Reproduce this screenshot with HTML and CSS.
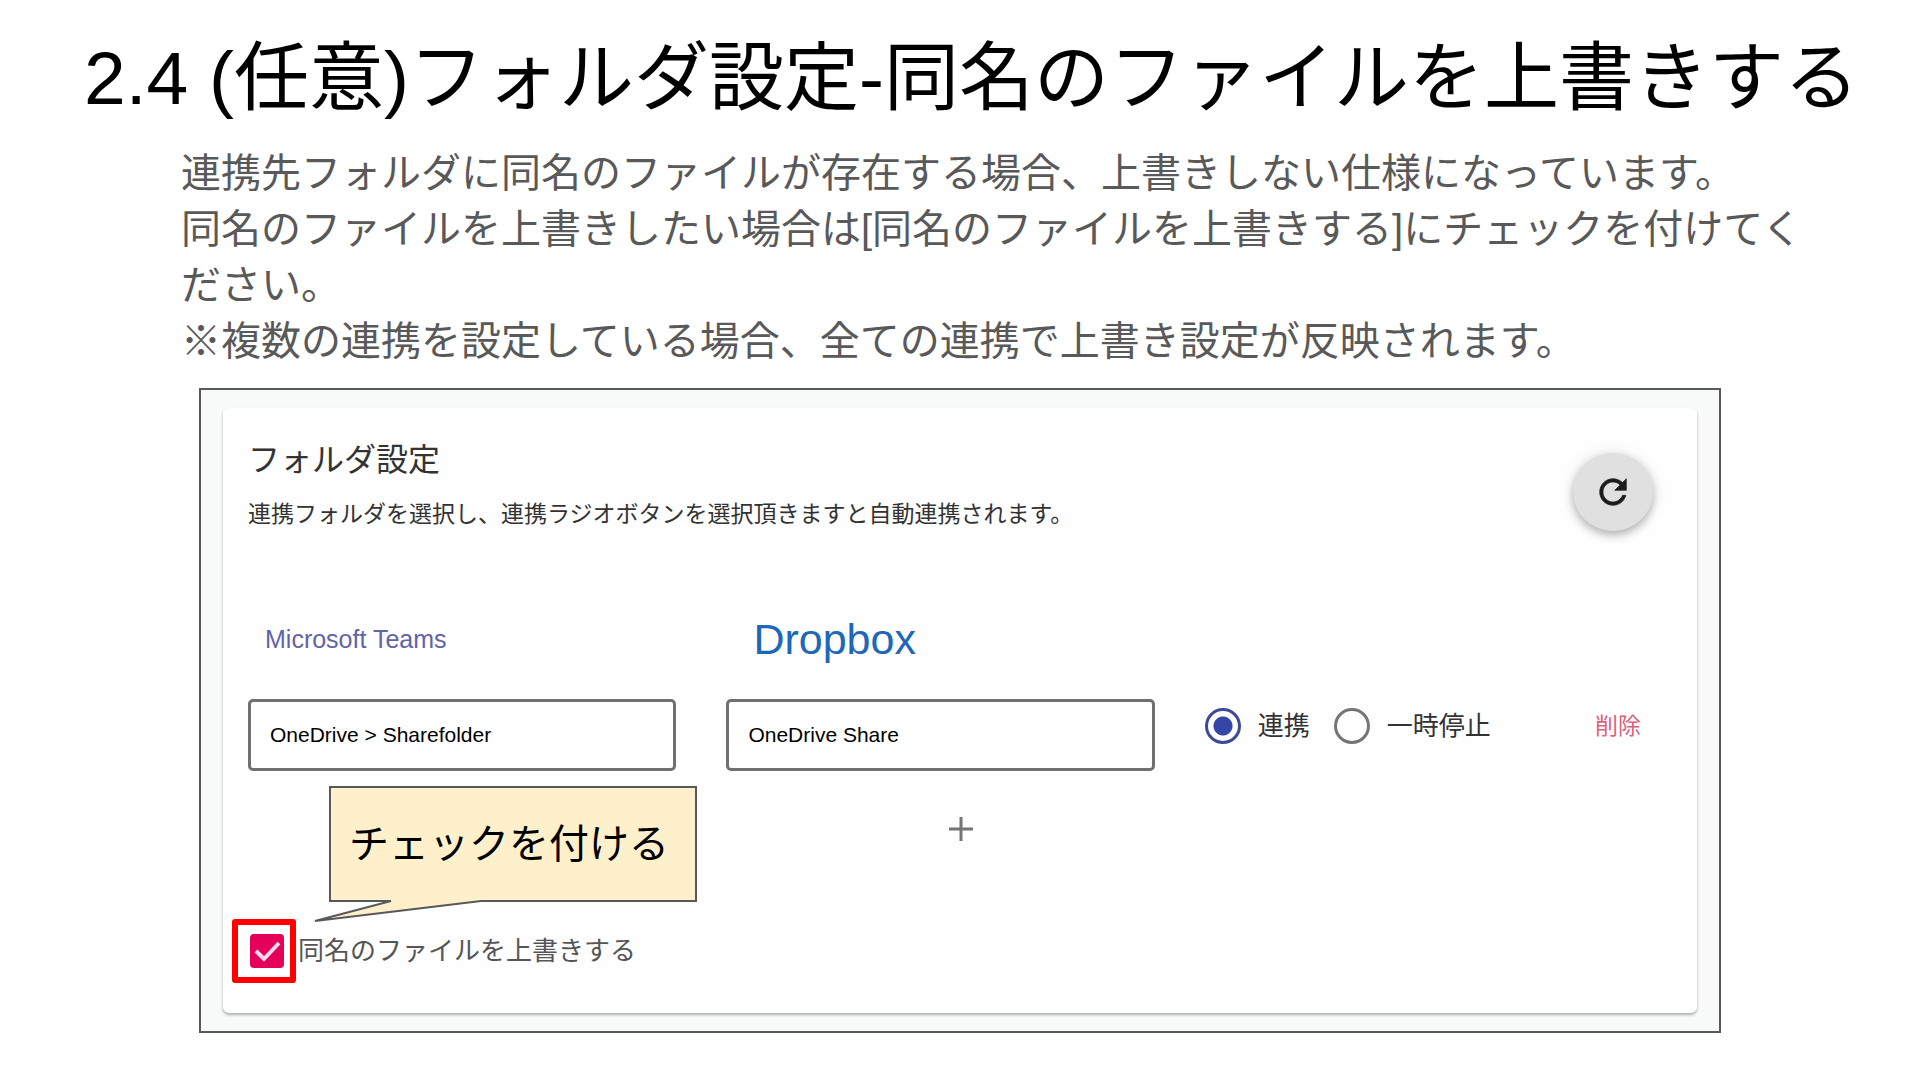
FILE: index.html
```
<!DOCTYPE html>
<html lang="ja">
<head>
    <meta charset="utf-8">
    <title>フォルダ設定</title>
    <link rel="stylesheet" href="styles.css">
</head>
<body>

<h1 class="title">2.4 (任意)フォルダ設定-同名のファイルを上書きする</h1>

<div class="description">
    <p>連携先フォルダに同名のファイルが存在する場合、上書きしない仕様になっています。</p>
    <p>同名のファイルを上書きしたい場合は[同名のファイルを上書きする]にチェックを付けてください。</p>
    <p>※複数の連携を設定している場合、全ての連携で上書き設定が反映されます。</p>
</div>

<div class="frame">
    <div class="card">
        <div class="card-header">
            <div>
                <h2>フォルダ設定</h2>
                <p>連携フォルダを選択し、連携ラジオボタンを選択頂きますと自動連携されます。</p>
            </div>
            <button type="button" class="btn-refresh" aria-label="更新">
                <svg viewBox="0 0 24 24" width="40" height="40">
                    <path d="M17.65 6.35C16.2 4.9 14.21 4 12 4c-4.42 0-7.99 3.58-7.99 8s3.57 8 7.99 8c3.73 0 6.84-2.55 7.73-6h-2.08c-.82 2.33-3.04 4-5.65 4-3.31 0-6-2.69-6-6s2.69-6 6-6c1.66 0 3.14.69 4.22 1.78L13 11h7V4l-2.35 2.35z"/>
                </svg>
            </button>
        </div>

        <div class="grid services">
            <label for="teams-folder" class="teams">Microsoft Teams</label>
            <label for="dropbox-folder" class="dropbox">Dropbox</label>
        </div>

        <div class="grid">
            <input type="text" id="teams-folder" class="folder" value="OneDrive &gt; Sharefolder">
            <input type="text" id="dropbox-folder" class="folder" value="OneDrive Share">
            <div class="actions">
                <input type="radio" name="status" id="status-on" checked>
                <label for="status-on">連携</label>
                <input type="radio" name="status" id="status-off">
                <label for="status-off">一時停止</label>
                <button type="button" class="btn-delete">削除</button>
            </div>
        </div>

        <button type="button" class="btn-add" aria-label="追加">
            <svg viewBox="0 0 24 24" width="24" height="24">
                <path d="M12 0v24M0 12h24"/>
            </svg>
        </button>

        <div class="overwrite">
            <span class="highlight"><input type="checkbox" id="overwrite" checked></span>
            <label for="overwrite">同名のファイルを上書きする</label>
            <div class="callout">
                チェックを付ける
                <svg class="tail" viewBox="0 0 172 26" width="172" height="26">
                    <path d="M78 1L2 21L168 1V0H78z" class="tail-fill"/>
                    <path d="M78 1L2 21L168 1" class="tail-line"/>
                </svg>
            </div>
        </div>
    </div>
</div>

</body>
</html>
```

FILE: styles.css
```
* {
    box-sizing: border-box;
}
body {
    margin: 0;
    padding-top: 28px;
    background: white;
    font-family: "Liberation Sans", "Noto Sans CJK JP", sans-serif;
}
h1, h2, p {
    margin: 0;
    font-weight: normal;
}
button {
    padding: 0;
    border: none;
    background: none;
    font-family: inherit;
    cursor: pointer;
}

.title {
    padding-left: 84px;
    font-size: 75px;
    line-height: 100px;
    white-space: nowrap;
}
.description {
    margin: 17px 100px 19px 181px;
    font-size: 40px;
    line-height: 56px;
    color: #595959;
}

.frame {
    margin: 0 199px;
    padding: 18px 22px;
    border: 2px solid #595959;
    background: #f8fafa;
}
.card {
    padding: 32px 24px 30px 25px;
    border-radius: 6px;
    background: #fefefe;
    box-shadow: 0 2px 3px rgba(0, 0, 0, 0.3);
    color: #333;
}

.card-header {
    display: flex;
    justify-content: space-between;
}
.card-header h2 {
    font-size: 32px;
    line-height: 40px;
}
.card-header p {
    margin-top: 18px;
    font-size: 23px;
    line-height: 32px;
}
.btn-refresh {
    display: flex;
    align-items: center;
    justify-content: center;
    width: 80px;
    height: 78px;
    margin: 13px 20px 0 0;
    border-radius: 50%;
    background: #e0e0e0;
    box-shadow: 0 4px 8px rgba(0, 0, 0, 0.25), 0 1px 16px rgba(0, 0, 0, 0.1);
}
.btn-refresh svg {
    fill: #1c1c1c;
    stroke: #1c1c1c;
    stroke-width: 0.4;
}

.grid {
    display: grid;
    grid-template-columns: 43fr 43fr 47fr;
    column-gap: 50px;
    align-items: center;
}
.services {
    margin: 84px 0 36px;
    line-height: 48px;
}
.teams {
    padding-left: 17px;
    font-size: 25px;
    color: #6264a7;
}
.dropbox {
    padding-left: 27px;
    font-size: 43px;
    color: #1f67b8;
}
.folder {
    width: 100%;
    height: 72px;
    padding: 0 19px;
    border: 3px solid #707070;
    border-radius: 5px;
    background: white;
    font-family: inherit;
    font-size: 21px;
    color: black;
}

.actions {
    display: flex;
    align-items: center;
    padding: 0 32px 18px 0;
    font-size: 26px;
    line-height: 32px;
}
.actions input {
    appearance: none;
    flex: none;
    width: 36px;
    height: 36px;
    margin: 0 17px 0 0;
    border: 3px solid #757575;
    border-radius: 50%;
}
.actions input:checked {
    border-color: #3f4a94;
    background: radial-gradient(circle, #3446a8 9px, transparent 10px);
}
.actions label {
    margin-right: 24px;
}
.btn-delete {
    margin-left: auto;
    font-size: 23px;
    line-height: 32px;
    color: #d9627c;
}

.btn-add {
    display: flex;
    align-items: center;
    justify-content: center;
    width: 40px;
    height: 40px;
    margin: 38px auto 70px;
}
.btn-add path {
    stroke: #757575;
    stroke-width: 3;
}

.overwrite {
    position: relative;
    display: flex;
    align-items: center;
    font-size: 26px;
    line-height: 32px;
    color: #555;
}
.highlight {
    display: flex;
    align-items: center;
    width: 64px;
    height: 64px;
    margin: 0 2px 0 -16px;
    padding-left: 12px;
    border: 6px solid red;
    border-radius: 3px;
}
.highlight input {
    appearance: none;
    width: 34px;
    height: 34px;
    margin: 0;
    border-radius: 4px;
    background: #e5005a url("data:image/svg+xml,%3Csvg xmlns='http://www.w3.org/2000/svg' viewBox='0 0 34 34'%3E%3Cpath d='M6 17l8 8L29 9' fill='none' stroke='%23fde' stroke-width='4'/%3E%3C/svg%3E");
}

.callout {
    position: absolute;
    left: 81px;
    bottom: 81px;
    padding: 26px 26px 26px 18px;
    border: 2px solid #595959;
    background: #fff0cc;
    font-size: 40px;
    line-height: 60px;
    color: black;
    white-space: nowrap;
}
.tail {
    position: absolute;
    left: -18px;
    top: 100%;
}
.tail-fill {
    fill: #fff0cc;
}
.tail-line {
    fill: none;
    stroke: #595959;
    stroke-width: 2;
}
```
